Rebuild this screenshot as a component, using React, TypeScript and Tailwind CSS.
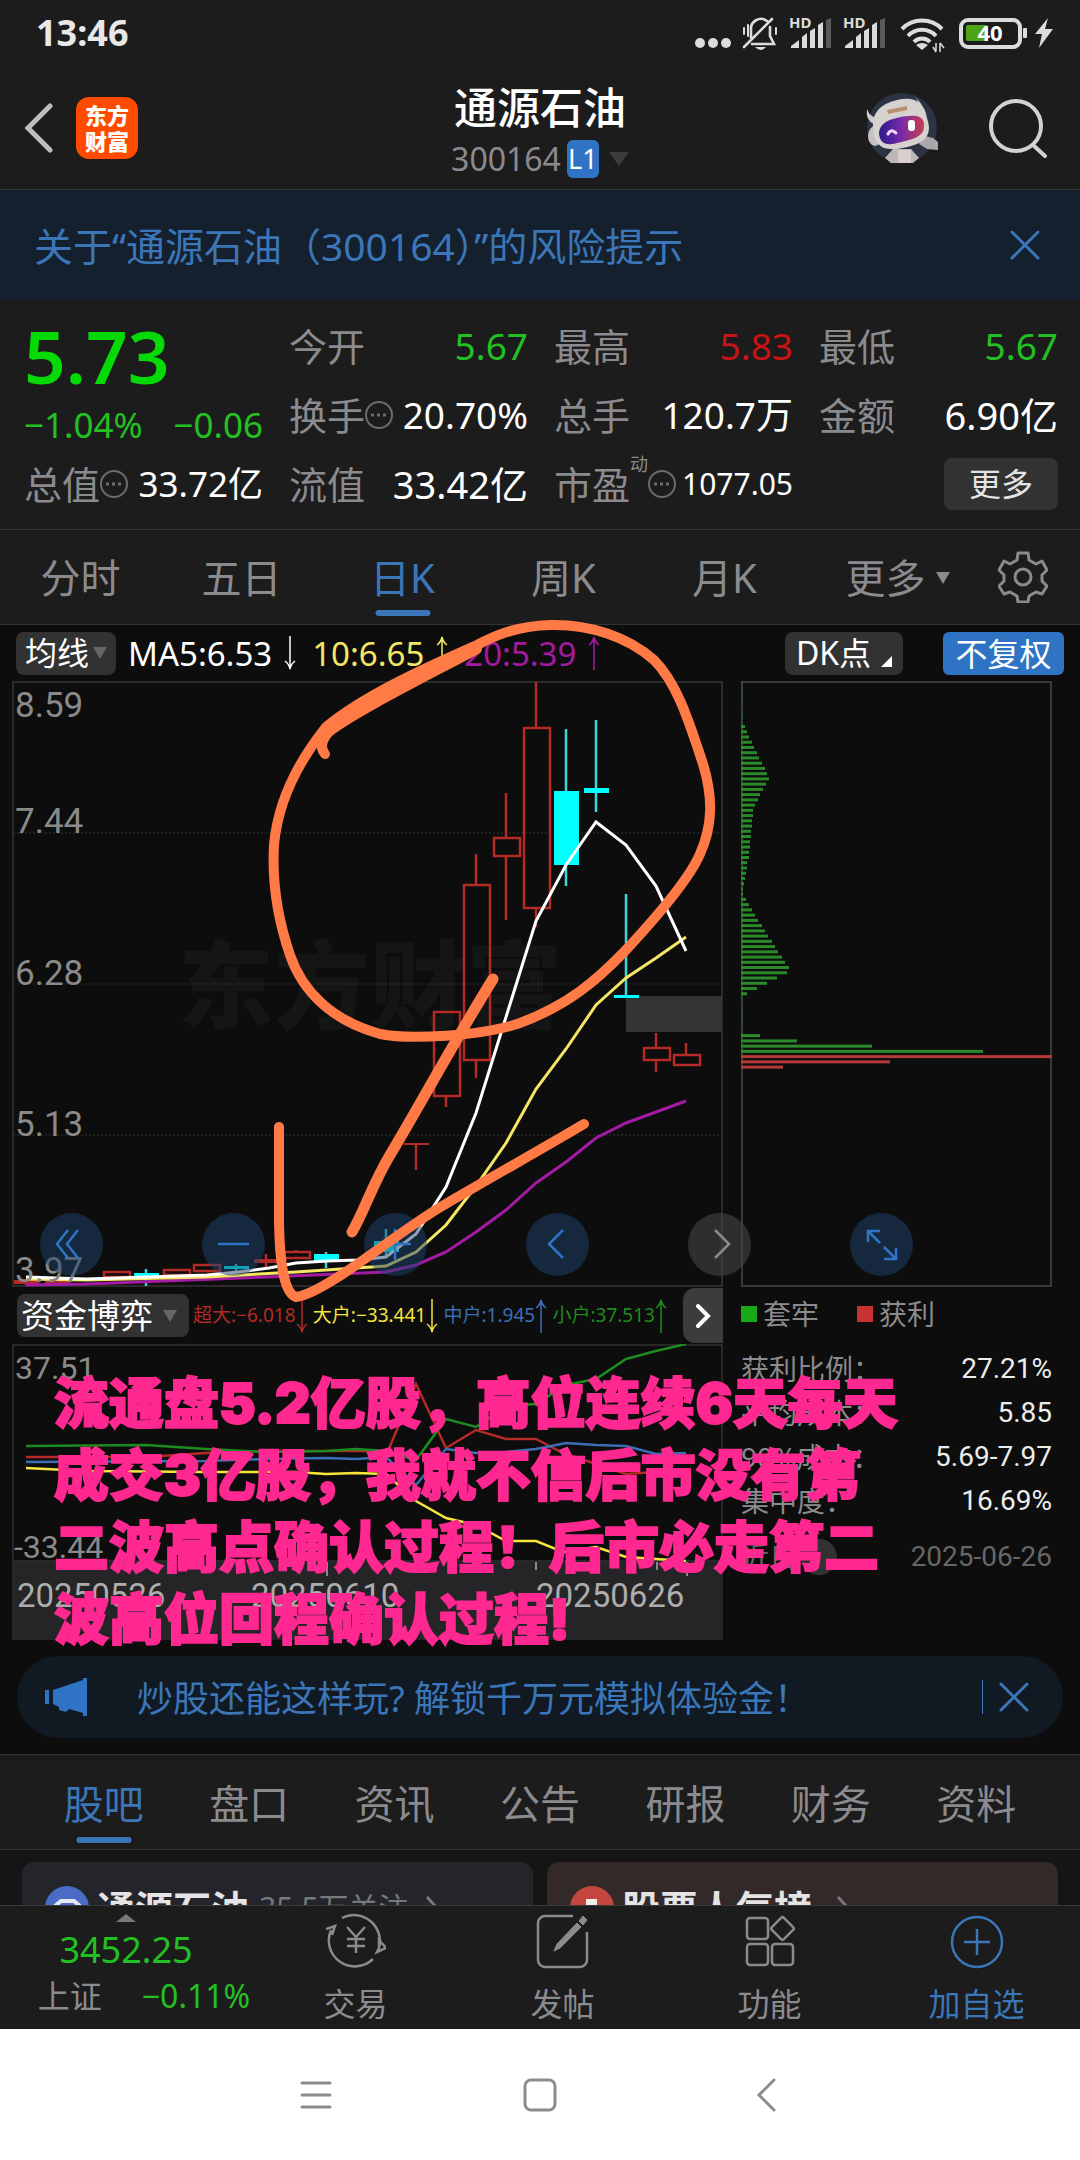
import React, { useState } from 'react';
import clsx from 'clsx';

const periods = ['分时', '五日', '日K', '周K', '月K'];
const sections = ['股吧', '盘口', '资讯', '公告', '研报', '财务', '资料'];

// x, body top, body bottom, wick top, wick bottom
const candles = [
  { x: 26, open: 1280, close: 1284, high: 1279, low: 1285, kind: 'fill' },
  { x: 57, open: 1281, close: 1284, high: 1279, low: 1286, kind: 'fill' },
  { x: 116, open: 1272, close: 1277, high: 1271, low: 1278, kind: 'up' },
  { x: 146, open: 1273, close: 1277, high: 1269, low: 1286, kind: 'down' },
  { x: 176, open: 1270, close: 1275, high: 1269, low: 1276, kind: 'up' },
  { x: 206, open: 1265, close: 1271, high: 1264, low: 1272, kind: 'up' },
  { x: 236, open: 1266, close: 1269, high: 1264, low: 1272, kind: 'down' },
  { x: 266, open: 1259, close: 1263, high: 1254, low: 1267, kind: 'fill' },
  { x: 296, open: 1252, close: 1258, high: 1250, low: 1259, kind: 'up' },
  { x: 326, open: 1254, close: 1261, high: 1252, low: 1268, kind: 'down' },
  { x: 386, open: 1241, close: 1252, high: 1229, low: 1257, kind: 'down' },
  { x: 416, open: 1143, close: 1145, high: 1144, low: 1170, kind: 'fill' },
  { x: 446, open: 1012, close: 1096, high: 1012, low: 1107, kind: 'up' },
  { x: 476, open: 885, close: 1060, high: 854, low: 1078, kind: 'up' },
  { x: 506, open: 838, close: 856, high: 793, low: 920, kind: 'up' },
  { x: 536, open: 728, close: 908, high: 682, low: 927, kind: 'up' },
  { x: 566, open: 791, close: 865, high: 729, low: 886, kind: 'down' },
  { x: 596, open: 788, close: 793, high: 720, low: 812, kind: 'down' },
  { x: 626, open: 995, close: 998, high: 894, low: 998, kind: 'down' },
  { x: 656, open: 1048, close: 1060, high: 1033, low: 1072, kind: 'up' },
  { x: 686, open: 1055, close: 1065, high: 1043, low: 1065, kind: 'up' },
];

const lockedBars = [
  4, 6, 8, 11, 13, 16, 18, 21, 24, 26, 28, 25, 22, 19, 17, 14, 12, 12, 11, 11, 10, 10, 9, 9, 8, 8, 6, 6,
  5, 4, 3, 2, 2, 5, 8, 11, 14, 17, 21, 24, 27, 31, 34, 37, 41, 44, 48, 46, 36, 26, 16, 6,
  0, 0, 0, 0, 0, 0, 0, 19, 56, 131, 242,
];
const profitBars = [311, 149, 42];

const priceLabels = [
  { text: '8.59', y: 717 },
  { text: '7.44', y: 833 },
  { text: '6.28', y: 985 },
  { text: '5.13', y: 1136 },
  { text: '3.97', y: 1282 },
];

const StatusIcons = () => (
  <svg viewBox="690 0 370 66" className="w-[370px] h-[66px]" fill="#dcdcdc">
    <circle cx="700" cy="43" r="5" />
    <circle cx="713" cy="43" r="5" />
    <circle cx="726" cy="43" r="5" />
    <g fill="none" stroke="#dcdcdc" strokeWidth="2.600" strokeLinecap="round">
      <path d="M751 38V30a10 10 0 0 1 16-9M770 27v9l4 8H752M744 47L772 19" />
      <path d="M744 28v6M748 25v11M776 28v6" strokeWidth="2" />
    </g>
    <path d="M755 47h11q-5 6-11 0z" />
    {[0, 54].map((dx) => (
      <g key={dx} transform={`translate(${dx} 0)`}>
        <text x="789" y="28" fontSize="15" fontWeight="700" className="font-['Noto_Sans']">HD</text>
        <path d="M791 48v-2l8-6v8zM802 37l5-4v15h-5zM810 31l5-3v20h-5zM818 25l5-3v26h-5z" />
        <path d="M826 20l5-2v30h-5z" fill="#5a5a5a" />
      </g>
    ))}
    <g fill="none" stroke="#dcdcdc" strokeWidth="4">
      <path d="M902 29a28 28 0 0 1 40 0M908 36a19 19 0 0 1 28 0M914 42a11 11 0 0 1 16 0" />
    </g>
    <path d="M916 45q6-4 12 0l-6 5z" />
    <path d="M936 43v8M940 43v9M933 47l3 5M940 43l4 5" stroke="#dcdcdc" strokeWidth="1.500" />
    <rect x="961" y="20" width="59" height="27" rx="7" fill="none" stroke="#dcdcdc" strokeWidth="4" />
    <rect x="966" y="25" width="22" height="16" rx="2" fill="#4fa318" />
    <text x="990" y="41" fontSize="22" fontWeight="700" fill="#fff" textAnchor="middle" className="font-['Noto_Sans']">40</text>
    <rect x="1023" y="28" width="4" height="10" rx="1" />
    <path d="M1048 18l-13 16h7l-3 14 14-19h-8z" />
  </svg>
);

const Robot = () => (
  <svg viewBox="0 0 74 72" className="w-[74px] h-[72px]">
    <circle cx="37" cy="36" r="35" fill="#2b3345" />
    <path d="M20 66l8-9h18l8 9-6 5H26z" fill="#bdb8b8" />
    <path d="M33 58h13v13H33z" fill="#d8d0cc" />
    <path d="M60 44l8 2 5 4v8l-11-1-8-5z" fill="#a9a7a9" />
    <path d="M2 17q3 8 10 9l-3 6Q0 28 2 17zM48 4q8 4 4 14l4 6q5-12-8-20z" fill="#cfcccc" />
    <ellipse cx="10" cy="44" rx="7" ry="10" fill="#c5c1c2" />
    <path d="M8 36Q6 14 32 8t30 18q8 22-16 28-16 5-27 2Q9 52 8 36z" fill="#d6d2d0" />
    <path d="M22 18l20-4v4l-19 4z" fill="#b89070" />
    <path d="M14 42q0-11 14-15 14-4 24-3 8 2 7 11 0 9-15 13-16 5-22 4-7-1-8-10z" fill="url(#visor)" />
    <path d="M23 42q3-6 8-1" fill="none" stroke="#f3d9ff" strokeWidth="3" strokeLinecap="round" />
    <rect x="43" y="28" width="7" height="11" rx="3" fill="#fff" />
    <defs>
      <linearGradient id="visor">
        <stop offset="0" stopColor="#2a1a8c" />
        <stop offset=".5" stopColor="#7a2aa8" />
        <stop offset="1" stopColor="#c8404f" />
      </linearGradient>
    </defs>
  </svg>
);

const MoreInfo = () => (
  <svg viewBox="0 0 28 28" className="w-7 h-7 shrink-0" fill="none" stroke="#6b6b6e" strokeWidth="2">
    <circle cx="14" cy="14" r="13" />
    <path d="M6 14h3M12 14h3M18 14h3" strokeWidth="3" />
  </svg>
);

const Close = ({ label }: { label: string }) => (
  <button aria-label={label}>
    <svg viewBox="0 0 30 30" className="w-[30px] h-[30px]" stroke="#3a76b8" strokeWidth="3" strokeLinecap="round">
      <path d="M2 2l26 26M28 2L2 28" />
    </svg>
  </button>
);

const Arrow = ({ up = false, className = '' }) => (
  <svg viewBox="0 0 12 34" className={clsx('w-3 h-[34px] shrink-0', className)} fill="none" stroke="currentColor" strokeWidth="1.500">
    {up ? <path d="M6 34V1M1 9Q5 6 6 1q1 5 5 8" /> : <path d="M6 0v33M1 25q4 3 5 8 1-5 5-8" />}
  </svg>
);

const Caret = ({ className = '' }) => (
  <svg viewBox="0 0 14 12" className={clsx('w-3.5 h-3', className)} fill="currentColor">
    <path d="M0 0h14L7 12z" />
  </svg>
);

type StatProps = { label: string; value: string; color?: string; size?: string; info?: boolean; sup?: string };

const Stat = ({ label, value, color = 'text-white', size = 'text-[37px]', info, sup }: StatProps) => (
  <div className="flex items-center h-[69px] whitespace-nowrap">
    <span className="text-[38px] text-[#8b8b8f]">{label}</span>
    {sup && <sup className="text-[18px] text-[#8b8b8f] -top-5">{sup}</sup>}
    {info && <MoreInfo />}
    <span className={clsx('ml-auto', color, size)}>{value}</span>
  </div>
);

const Header = () => (
  <header className="bg-[#1c1c1c] border-b border-[#333639]">
    <div className="flex items-center justify-between h-[66px] pl-9 pr-5">
      <span className="text-[36px] font-bold text-[#e8e8e8]">13:46</span>
      <StatusIcons />
    </div>
    <div className="grid grid-cols-3 items-center h-[123px] px-6">
      <div className="flex items-center gap-[22px]">
        <button aria-label="返回">
          <svg viewBox="0 0 30 50" className="w-[30px] h-[50px]" fill="none" stroke="#bdbdbd" strokeWidth="5" strokeLinecap="round">
            <path d="M26 3L4 25l22 22" />
          </svg>
        </button>
        <a href="#home" className="flex flex-col items-center justify-center w-[62px] h-[62px] rounded-[13px] bg-[#ff4b00] text-[22px] leading-[26px] font-black text-white">
          <span>东方</span>
          <span>财富</span>
        </a>
      </div>
      <div className="flex flex-col items-center pt-1">
        <h1 className="text-[43px] leading-[58px] font-medium text-white">通源石油</h1>
        <div className="flex items-center gap-1.5 h-11 text-[32px] text-[#8b8b8f]">
          300164
          <span className="w-8 h-[38px] rounded-md bg-[#2f74c4] text-[27px] leading-[38px] text-center text-white">L1</span>
          <svg viewBox="0 0 20 14" className="w-5 h-3.5 ml-1" fill="#3c3c3e"><path d="M0 0h20L10 14z" /></svg>
        </div>
      </div>
      <div className="flex items-center justify-end gap-[49px] pr-2">
        <Robot />
        <button aria-label="搜索">
          <svg viewBox="0 0 60 60" className="w-[60px] h-[60px]" fill="none" stroke="#d2d2d2" strokeWidth="4" strokeLinecap="round">
            <circle cx="28" cy="28" r="25" />
            <path d="M45 47l12 11" />
          </svg>
        </button>
      </div>
    </div>
  </header>
);

const Quote = () => (
  <section className="grid grid-cols-4 gap-x-[26px] h-[230px] pt-[11px] pl-6 pr-[22px] bg-[#1c1c1c] border-b border-[#333]">
    <div>
      <div className="h-[90px] text-[73px] leading-[90px] font-semibold text-[#06da06]">5.73</div>
      <div className="flex justify-between h-12 text-[35px] leading-[48px] text-[#23c023] whitespace-nowrap">
        <span>−1.04%</span>
        <span>−0.06</span>
      </div>
      <Stat label="总值" value="33.72亿" size="text-[35px]" info />
    </div>
    <div>
      <Stat label="今开" value="5.67" color="text-[#23c023]" />
      <Stat label="换手" value="20.70%" info />
      <Stat label="流值" value="33.42亿" size="text-[38px]" />
    </div>
    <div>
      <Stat label="最高" value="5.83" color="text-[#c81414]" />
      <Stat label="总手" value="120.7万" />
      <Stat label="市盈" value="1077.05" size="text-[30px]" sup="动" info />
    </div>
    <div>
      <Stat label="最低" value="5.67" color="text-[#23c023]" />
      <Stat label="金额" value="6.90亿" size="text-[38px]" />
      <div className="flex items-center justify-end h-[69px]">
        <button className="w-[114px] h-[52px] rounded-lg bg-[#323232] text-[32px] text-[#e4e4e4]">更多</button>
      </div>
    </div>
  </section>
);

const PriceChart = () => (
  <svg viewBox="12 681 711 606" className="block w-full">
    <text x="178" y="1021" fontSize="96" fontWeight="900" fill="#151515">东方财富</text>
    <rect x="13" y="682" width="709" height="604" fill="none" stroke="#2a2a2a" strokeWidth="2" />
    {[833, 984, 1135].map((y) => (
      <path key={y} d={`M13 ${y}H722`} stroke="#333" strokeDasharray="2 2" />
    ))}
    <rect x="626" y="996" width="96" height="36" fill="#333" />
    {candles.map((c) => {
      const color = c.kind === 'down' ? '#3cd5d8' : '#b32a26';
      return (
        <g key={c.x} stroke={color} strokeWidth="2.500" fill="none">
          <path d={`M${c.x} ${c.high}V${c.open}M${c.x} ${c.close}V${c.low}`} />
          {c.kind === 'up' && <rect x={c.x - 12} y={c.open} width="26" height={c.close - c.open} />}
          {c.kind === 'down' && <rect x={c.x - 12} y={c.open} width="25" height={c.close - c.open} fill="#00ffff" stroke="none" />}
          {c.kind === 'fill' && <rect x={c.x - 12} y={c.open} width="25" height={c.close - c.open} fill={color} stroke="none" />}
        </g>
      );
    })}
    <g fill="none" strokeWidth="3">
      <path stroke="#a31aa3" d="M26 1285L86 1284 266 1277 386 1272 416 1265 446 1252 476 1232 506 1210 536 1183 566 1162 596 1138 626 1123 656 1112 686 1101" />
      <path stroke="#f5e663" d="M26 1279L86 1280 207 1277 296 1272 386 1266 416 1252 446 1225 476 1186 506 1143 536 1089 566 1049 596 1005 626 978 656 958 686 937" />
      <path stroke="#fff" d="M26 1277L86 1279 207 1275 238 1272 269 1268 296 1263 327 1261 358 1260 386 1257 416 1234 446 1187 476 1113 506 1017 536 921 566 865 596 822 626 845 656 886 686 951" />
    </g>
    <g fill="#8a8a8a" fontSize="35" className="font-[Roboto]">
      {priceLabels.map((l) => (
        <text key={l.text} x="15" y={l.y}>{l.text}</text>
      ))}
    </g>
  </svg>
);

const FundChart = () => (
  <svg viewBox="12 1344 711 296" className="block w-full">
    <rect x="12" y="1562" width="711" height="78" fill="#252527" />
    <rect x="13" y="1345" width="709" height="216" fill="none" stroke="#444" />
    <g fill="none" strokeWidth="2.500">
      <path stroke="#b32a26" d="M26 1457H146L206 1453 266 1451 388 1451 416 1384 446 1448 476 1430 506 1439H536L563 1453 596 1464 626 1474 656 1472 686 1476" />
      <path stroke="#3a6fb5" d="M26 1462L206 1461 266 1459 326 1458 356 1459 386 1457 416 1485 446 1449 476 1453 506 1452 536 1449 566 1443 596 1445 626 1446 656 1454 686 1453" />
      <path stroke="#f5e63c" d="M26 1468L86 1471 206 1472 296 1472 326 1474 356 1473 386 1474 416 1501 446 1518 476 1525 506 1541H536L563 1552 596 1547 626 1557 686 1561" />
      <path stroke="#1f8a1f" d="M26 1446L146 1445 206 1449 266 1452 326 1451 356 1449 386 1451 416 1460 446 1419 476 1427 506 1406 536 1404 566 1385 596 1379 626 1359 656 1351 686 1344" />
    </g>
    <path d="M327 1562v14M358 1562v8M536 1562v8M657 1562v8M687 1562v14" stroke="#888" strokeWidth="2" />
    <g className="font-[Roboto]" fontSize="32" fill="#8a8a8a">
      <text x="15" y="1379">37.51</text>
      <text x="14" y="1558">-33.44</text>
    </g>
    <g className="font-[Roboto]" fontSize="33" fill="#adadad">
      <text x="17" y="1607">20250526</text>
      <text x="251" y="1607">20250610</text>
      <text x="536" y="1607">20250626</text>
    </g>
  </svg>
);

const ChipChart = () => (
  <svg viewBox="741 681 311 606" className="block w-full">
    <rect x="742" y="682" width="309" height="604" fill="none" stroke="#3a3a3a" strokeWidth="2" />
    <path d="M742 682V1060" stroke="#1f6a1f" strokeDasharray="3 2" />
    <path d="M742 1140V1286" stroke="#5a2622" strokeDasharray="3 2" />
    {lockedBars.map((w, i) => (
      <rect key={i} x="741" y={725 + i * 5.24} width={w} height="3" fill="#2a8a2a" />
    ))}
    {profitBars.map((w, i) => (
      <rect key={i} x="741" y={725 + (i + 63) * 5.24} width={w} height="3" fill="#b33a38" />
    ))}
  </svg>
);

const chartTools = [
  { label: '最早', d: 'M28 17L17 31l11 14M38 17L27 31l11 14' },
  { label: '缩小', d: 'M16 31h31' },
  { label: '放大', d: 'M16 31h31M31 16v31' },
  { label: '前一日', d: 'M37 17L23 31l14 14' },
  { label: '后一日', d: 'M27 17l14 14-14 14', off: true },
  { label: '全屏', d: 'M18 29V18h12M18 18l12 12M46 35v11H34M46 46L34 34' },
];

const funds = [
  { label: '超大:−6.018', color: 'text-[#b32a26]', up: false },
  { label: '大户:−33.441', color: 'text-[#f5e63c]', up: false },
  { label: '中户:1.945', color: 'text-[#3a6fb5]', up: true },
  { label: '小户:37.513', color: 'text-[#1f8a1f]', up: true },
];

const chips = [
  { label: '获利比例：', value: '27.21%' },
  { label: '平均成本：', value: '5.85' },
  { label: '90%成本：', value: '5.69-7.97' },
  { label: '集中度：', value: '16.69%' },
];

const Markup = () => (
  <>
    <svg viewBox="0 625 1080 1031" className="absolute inset-x-0 top-0 w-full overflow-visible pointer-events-none" fill="none" stroke="#ff7a45" strokeWidth="10" strokeLinecap="round" strokeLinejoin="round">
      <path d="M325 754Q317 744 330 731C355 712 415 682 477 649" />
      <path d="M477 645C500 633 520 626 550 625C590 624 628 637 654 660C678 684 690 725 703 764C713 797 713 825 700 854C688 882 652 922 625 951C598 979 568 1006 517 1024C480 1036 410 1040 380 1034C330 1020 302 990 290 955C278 920 272 880 274 845C278 800 298 762 326 727C362 697 420 670 477 645" />
      <path d="M493 979C455 1040 420 1105 390 1155C372 1185 364 1212 352 1232" strokeWidth="11" />
      <path d="M279 1127V1221Q280 1292 296 1297C325 1294 400 1230 444 1205C490 1178 540 1150 584 1124" strokeWidth="10" />
    </svg>
    <p className="absolute left-[54px] top-[742px] text-[55px] leading-[72px] font-black text-[#ff2891] [-webkit-text-stroke:2px_#ff2891] whitespace-nowrap pointer-events-none font-['Inter','Noto_Sans_CJK_SC',sans-serif]">
      流通盘5.2亿股，高位连续6天每天<br />
      成交3亿股，我就不信后市没有第<br />
      二波高点确认过程！后市必走第二<br />
      波高位回程确认过程!
    </p>
  </>
);

const ChartPanel = () => (
  <section className="relative">
    <div className="flex items-center h-14 px-4 text-[33px] whitespace-nowrap">
      <button className="flex items-center justify-center gap-1 w-[100px] h-[43px] mr-3 rounded-lg bg-[#323232] text-[32px] text-white">
        均线
        <Caret className="text-[#666]" />
      </button>
      <span className="text-white">MA5:6.53</span>
      <Arrow className="ml-3 mr-4 text-white" />
      <span className="text-[#f5e663]">10:6.65</span>
      <Arrow up className="ml-3 mr-4 text-[#f5e663]" />
      <span className="text-[#a31aa3]">20:5.39</span>
      <Arrow up className="ml-3 text-[#a31aa3]" />
      <button className="flex items-center justify-center gap-2.5 w-[118px] h-[43px] ml-auto mr-10 rounded-lg bg-[#323232] text-[32px] text-white">
        DK点
        <svg viewBox="0 0 11 11" className="w-[11px] h-[11px] self-end mb-2" fill="#fff"><path d="M11 0v11H0z" /></svg>
      </button>
      <button className="w-[121px] h-[43px] rounded-md bg-[#2f74c4] text-[32px] leading-[43px] text-white">不复权</button>
    </div>

    <div className="relative flex gap-[18px] pl-3 pr-7">
      <div className="flex-[711] min-w-0">
        <PriceChart />
        <div className="flex items-center h-[57px] pl-[5px]">
          <button className="flex items-center justify-between w-[172px] h-[43px] px-1 rounded-lg bg-[#323232] text-[33px] text-white">
            资金博弈
            <Caret className="mr-2 text-[#666]" />
          </button>
          <div className="flex flex-1 justify-between px-1 text-[19px] whitespace-nowrap">
            {funds.map((f) => (
              <span key={f.label} className={clsx('flex items-center', f.color)}>
                {f.label}
                <Arrow up={f.up} />
              </span>
            ))}
          </div>
          <button aria-label="更多指标" className="flex items-center justify-center w-10 h-[55px] ml-3 rounded-l-xl bg-[#3c3c3c]">
            <svg viewBox="0 0 16 26" className="w-4 h-[26px]" fill="none" stroke="#fff" strokeWidth="4" strokeLinecap="round"><path d="M3 3l10 10L3 23" /></svg>
          </button>
        </div>
        <FundChart />
      </div>

      <div className="flex-[311] min-w-0">
        <ChipChart />
        <div className="flex items-center h-[54px] text-[28px] text-[#8b8b8f]">
          <span className="w-4 h-4 mr-1.5 bg-[#18a818]" />
          套牢
          <span className="w-4 h-4 ml-[38px] mr-1.5 bg-[#c83232]" />
          获利
        </div>
        <dl className="pt-1.5">
          {chips.map((c) => (
            <div key={c.label} className="flex items-center justify-between h-11 text-[28px]">
              <dt className="text-[#8b8b8f]">{c.label}</dt>
              <dd className="text-[#ececec] font-[Roboto]">{c.value}</dd>
            </div>
          ))}
        </dl>
        <div className="flex items-center h-11 mt-3 text-[28px] text-[#666]">
          近日
          <span className="w-9 h-9 ml-1 rounded-full bg-[#323232]" />
          <time className="ml-auto font-[Roboto]">2025-06-26</time>
        </div>
      </div>

      <div className="absolute left-10 top-[532px] flex gap-[99px]">
        {chartTools.map((t) => (
          <button key={t.label} aria-label={t.label} className={clsx('w-[63px] h-[63px] rounded-full', t.off ? 'bg-[#444]/60' : 'bg-[#1f4470]/50')}>
            <svg viewBox="0 0 63 63" fill="none" stroke={t.off ? '#8b8b8f' : '#2f74c4'} strokeWidth="2.500">
              <path d={t.d} />
            </svg>
          </button>
        ))}
      </div>
    </div>

    <Markup />
  </section>
);

const Promo = () => (
  <div className="flex items-center h-[82px] mt-4 mb-4 mx-[17px] pl-7 pr-[34px] rounded-full bg-[#111922]">
    <svg viewBox="0 0 42 38" className="w-[42px] h-[38px] mr-[50px]" fill="#2f74c4">
      <path d="M0 12h4v14H0zM8 12L38 2V0h4v38h-4v-3l-14-4-3 3-7-2v-3l-6-3z" />
    </svg>
    <a href="#promo" className="pt-1 text-[36px] text-[#3a76b8] whitespace-nowrap">炒股还能这样玩? 解锁千万元模拟体验金！</a>
    <span className="w-px h-[34px] ml-auto mr-4 bg-[#3a76b8]" />
    <Close label="关闭推广" />
  </div>
);

const ChevronRight = ({ className = '' }) => (
  <svg viewBox="0 0 14 26" className={clsx('w-3.5 h-[26px]', className)} fill="none" stroke="#77777c" strokeWidth="3">
    <path d="M2 2l10 11L2 24" />
  </svg>
);

const Cards = () => (
  <div className="flex gap-3.5 h-[55px] pt-3 px-[22px] overflow-hidden bg-[#151515]">
    <div className="flex flex-1 items-center h-[92px] px-[23px] rounded-xl bg-[#24252b] shrink-0">
      <svg viewBox="0 0 44 44" className="w-11 h-11 mr-2">
        <circle cx="22" cy="22" r="22" fill="#4a6cc4" />
        <path d="M10 20l6-5h13l6 5" fill="none" stroke="#e8e8f4" strokeWidth="4" />
      </svg>
      <span className="text-[38px] font-bold text-[#e4e4e4]">通源石油</span>
      <span className="ml-2.5 text-[30px] text-[#77777c]">35.5万关注</span>
      <ChevronRight className="ml-4" />
    </div>
    <div className="flex flex-1 items-center h-[92px] px-[23px] rounded-xl bg-[#322928] shrink-0">
      <svg viewBox="0 0 44 44" className="w-11 h-11 mr-2">
        <circle cx="22" cy="22" r="22" fill="#c4463f" />
        <path d="M16 13h11v20H16z" fill="#eee" />
      </svg>
      <span className="text-[38px] font-bold text-[#e4e4e4]">股票人气榜</span>
      <ChevronRight className="ml-6" />
    </div>
  </div>
);

const actions = [
  {
    label: '交易',
    icon: (
      <>
        <path d="M16 6A26 26 0 0 1 53 36M47 47A26 26 0 0 1 5 18M0 17l9-3-3 9M51 40l9-4-7-8v8z" fill="none" />
        <path d="M21 15l9 10 9-10M30 25v16M21 27h18M21 34h18" />
      </>
    ),
  },
  {
    label: '发帖',
    icon: (
      <>
        <path d="M40 4H12a7 7 0 0 0-7 7v37a7 7 0 0 0 7 7h35a7 7 0 0 0 7-7V20" />
        <path d="M50 4l4 4-4 5-4-4zM44 11l4 4-21 21-6 3 3-7z" fill="currentColor" strokeWidth="1" />
      </>
    ),
  },
  {
    label: '功能',
    icon: (
      <>
        <rect x="7" y="6" width="21" height="21" rx="3" />
        <rect x="7" y="32" width="21" height="21" rx="3" />
        <rect x="32" y="32" width="21" height="21" rx="3" />
        <rect x="34" y="8" width="17" height="17" rx="2" transform="rotate(45 42.500 16.500)" />
      </>
    ),
  },
  {
    label: '加自选',
    active: true,
    icon: (
      <>
        <circle cx="30" cy="30" r="25" />
        <path d="M30 17v26M17 30h26" />
      </>
    ),
  },
];

const BottomBar = () => (
  <nav className="flex h-[124px] bg-[#1c1c1c] border-t border-[#3a3a3a]">
    <div className="flex flex-col items-center w-[252px] pt-2">
      <svg viewBox="0 0 20 8" className="w-5 h-2" fill="#77777c"><path d="M0 8L10 0l10 8z" /></svg>
      <span className="text-[36px] leading-[56px] text-[#23c023]">3452.25</span>
      <div className="flex items-center gap-10 h-9 pl-9 text-[32px] text-[#23c023] whitespace-nowrap">
        <span className="text-[#8b8b8f]">上证</span>
        <span>−0.11%</span>
      </div>
    </div>
    {actions.map((a) => (
      <button key={a.label} className={clsx('flex flex-1 flex-col items-center pt-1.5', a.active ? 'text-[#3a76b8]' : 'text-[#8b8b8f]')}>
        <svg viewBox="0 0 60 60" className="w-[60px] h-[60px]" fill="none" stroke="currentColor" strokeWidth="2.500">{a.icon}</svg>
        <span className="mt-2 text-[32px] leading-[48px]">{a.label}</span>
      </button>
    ))}
  </nav>
);

const SystemNav = () => (
  <div className="flex items-center justify-center gap-[191px] h-[131px] bg-white">
    <svg viewBox="0 0 34 34" className="w-[34px] h-[34px]" stroke="#8c8c8c" strokeWidth="3" strokeLinecap="round"><path d="M4 5h28M4 17h28M4 29h28" /></svg>
    <svg viewBox="0 0 34 34" className="w-[34px] h-[34px]" fill="none" stroke="#8c8c8c" strokeWidth="3"><rect x="2" y="2" width="30" height="30" rx="6" /></svg>
    <svg viewBox="0 0 34 34" className="w-[34px] h-[34px]" fill="none" stroke="#8c8c8c" strokeWidth="3" strokeLinecap="round"><path d="M26 2L11 17l15 15" /></svg>
  </div>
);

const App = () => {
  const [period, setPeriod] = useState('日K');
  const [section, setSection] = useState('股吧');

  return (
    <div className="bg-[#0d0d0d] leading-none overflow-hidden font-['Noto_Sans','Noto_Sans_CJK_SC',sans-serif]">
      <Header />
      <div className="flex items-center justify-between h-[110px] pl-[34px] pr-10 bg-[#15202f]">
        <a href="#risk" className="text-[39px] text-[#3a76b8] whitespace-nowrap">关于“通源石油（300164）”的风险提示</a>
        <Close label="关闭提示" />
      </div>
      <Quote />

      <div className="grid grid-cols-[repeat(6,minmax(0,1fr))_114px] h-[95px] bg-[#1c1c1c] border-b border-[#333] text-[40px] text-[#8b8b8f]">
        {periods.map((p) => (
          <button key={p} onClick={() => setPeriod(p)} className={clsx('relative pt-0.5', p === period && 'text-[#3a76b8]')}>
            {p}
            {p === period && <span className="absolute bottom-2 left-1/2 w-[55px] h-1.5 -translate-x-1/2 rounded-full bg-[#3a76b8]" />}
          </button>
        ))}
        <button className="flex items-center justify-center gap-2.5 pt-0.5 pl-6">
          更多
          <Caret />
        </button>
        <button aria-label="设置" className="flex items-center justify-center">
          <svg viewBox="0 0 50 52" className="w-[50px] h-[52px]" fill="none" stroke="currentColor" strokeWidth="3" strokeLinejoin="round">
            <path d="M20 2h10l1 7 7 4 6-3 5 9-5 5v6l5 5-5 8-6-2-7 4-1 6H20l-1-6-7-4-6 2-5-8 5-5v-6l-5-5 5-9 6 3 7-4z" />
            <circle cx="25" cy="26" r="8" />
          </svg>
        </button>
      </div>

      <ChartPanel />
      <Promo />

      <div className="flex h-[96px] px-[31px] bg-[#1c1c1c] border-y border-[#333] text-[40px] text-[#8b8b8f]">
        {sections.map((s) => (
          <button key={s} onClick={() => setSection(s)} className={clsx('relative flex-1 pt-1', s === section && 'text-[#3a76b8]')}>
            {s}
            {s === section && <span className="absolute bottom-1.5 left-1/2 w-[55px] h-1.5 -translate-x-1/2 rounded-full bg-[#3a76b8]" />}
          </button>
        ))}
      </div>
      <Cards />
      <BottomBar />
      <SystemNav />
    </div>
  );
};

export default App;
